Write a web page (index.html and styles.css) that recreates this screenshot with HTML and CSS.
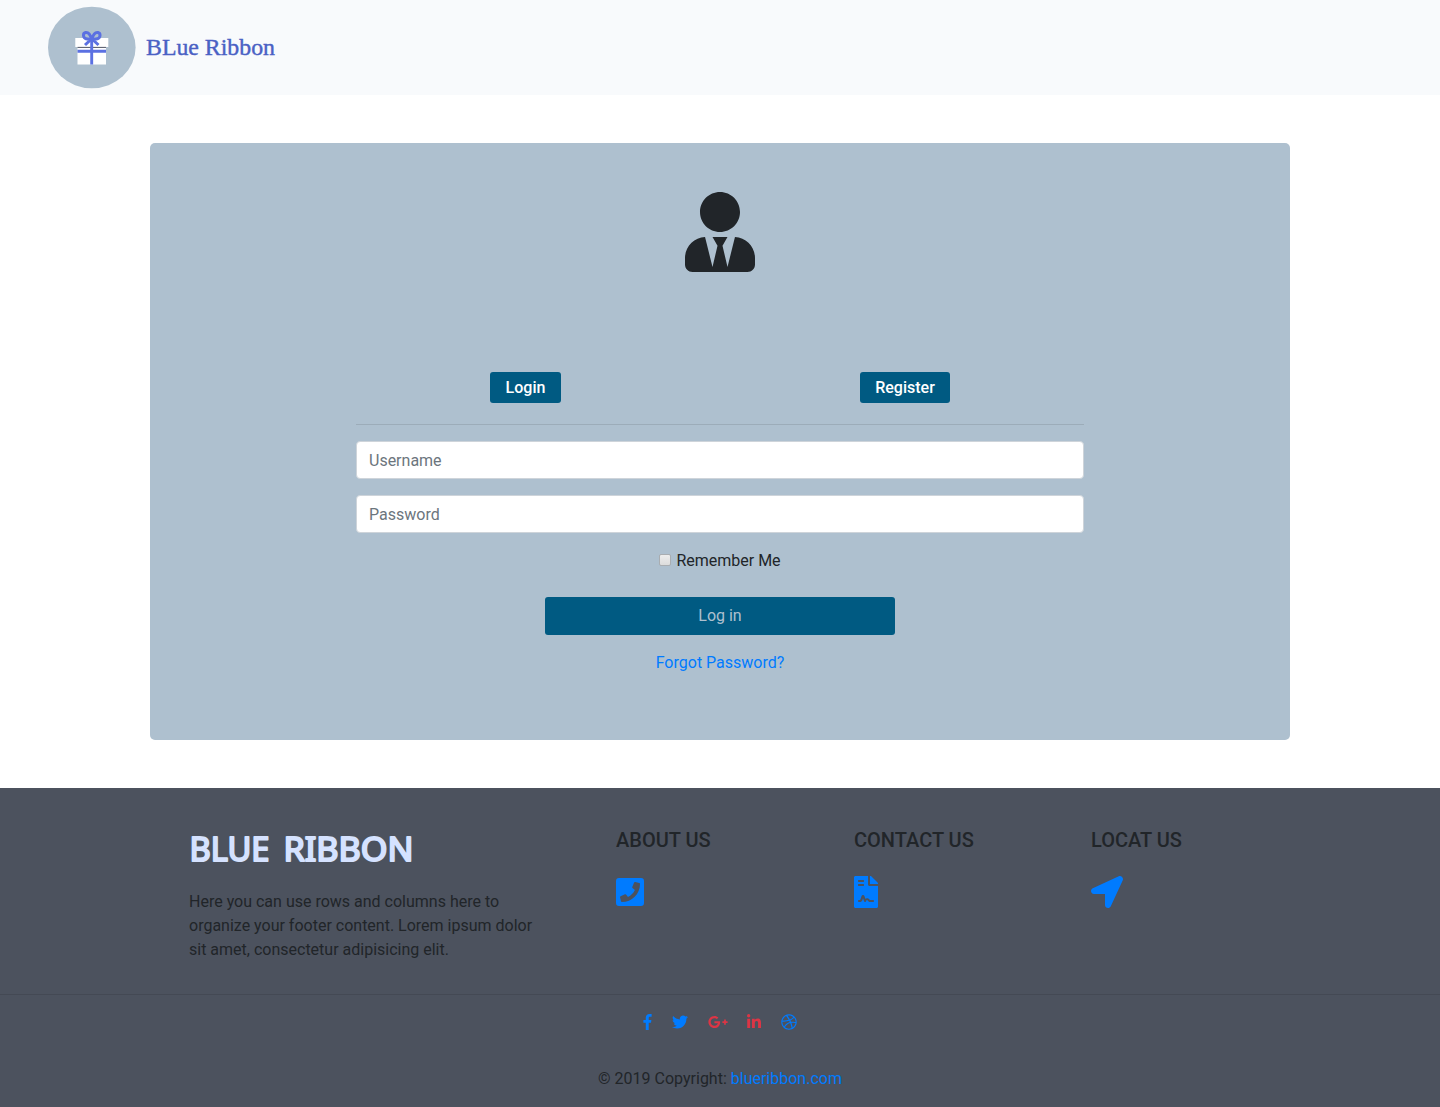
FILE: index.html
```html
<!DOCTYPE html>
<html lang="en">
<head>
<meta charset="utf-8">
<title>Blue Ribbon</title>
<link rel="stylesheet" href="styles.css">
</head>
<body>
<nav class="navbar">
  <a class="brand" href="#">
    <svg width="230" height="83" viewBox="0 0 230 83">
      <ellipse cx="43.8" cy="41.5" rx="43.8" ry="40.8" fill="#aec0cf"/>
      <path fill="#fff" d="M27.3 32h33v9h-33zM29.5 41h28.5v17.500h-28.500z"/>
      <path d="M29.500 41.400h28.500" stroke="#3b4152" stroke-width=".9"/>
      <path d="M29.500 45.300h28.500M43.700 33v25.500" stroke="#5b70e2" stroke-width="2.900"/>
      <path d="M43.700 33.500C42.500 29 40 26 37.500 26.500C34.500 27.300 35 31.800 38 32.700C40 33.300 42 33.200 43.700 33.500C45.400 33.200 47.500 33.300 49.500 32.700C52.500 31.800 53 27.300 50 26.500C47.500 26 45 29 43.700 33.500M44 32.500l-7 6.500M43.500 32.500l7 6.500" fill="none" stroke="#5b70e2" stroke-width="3"/>
      <text class="brand-text" x="98" y="49" textLength="129" lengthAdjust="spacingAndGlyphs">BLue Ribbon</text>
    </svg>
  </a>
</nav>

<main class="card">
  <svg class="avatar" viewBox="0 0 448 512"><path d="M224 256c70.7 0 128-57.3 128-128S294.700 0 224 0 96 57.300 96 128s57.300 128 128 128zm95.800 32.600L272 480l-32-136 32-56h-96l32 56-32 136-47.800-191.400C56.900 292 0 350.300 0 422.400V464c0 26.500 21.500 48 48 48h352c26.500 0 48-21.500 48-48v-41.600c0-72.100-56.900-130.400-128.200-133.800z"/></svg>
  <form class="form">
    <div class="tabs">
      <button type="button" class="tab">Login</button>
      <button type="button" class="tab">Register</button>
    </div>
    <hr class="rule">
    <input class="field" type="text" placeholder="Username">
    <input class="field" type="password" placeholder="Password">
    <label class="remember"><input class="check" type="checkbox"><span>Remember Me</span></label>
    <button type="button" class="submit">Log in</button>
    <a class="link" href="#">Forgot Password?</a>
  </form>
</main>

<footer class="footer">
  <div class="columns">
    <section class="about">
      <svg class="footer-title" width="240" height="43" viewBox="0 0 240 43"><text y="32.500"><tspan x="0.500" textLength="80" lengthAdjust="spacingAndGlyphs">BLUE</tspan> <tspan x="94.500" textLength="130" lengthAdjust="spacingAndGlyphs">RIBBON</tspan></text></svg>
      <p>Here you can use rows and columns here to organize your footer content. Lorem ipsum dolor sit amet, consectetur adipisicing elit.</p>
    </section>
    <section>
      <h5>ABOUT US</h5>
      <a href="#"><svg width="28" height="32" viewBox="0 0 448 512"><path d="M400 32H48A48 48 0 0 0 0 80v352a48 48 0 0 0 48 48h352a48 48 0 0 0 48-48V80a48 48 0 0 0-48-48zM94 416c-7.033 0-13.057-4.873-14.616-11.627l-14.998-65a15 15 0 0 1 8.707-17.160l69.998-29.999a15 15 0 0 1 17.518 4.289l30.997 37.885c48.944-22.963 88.297-62.858 110.781-110.780l-37.886-30.997a15.001 15.001 0 0 1-4.289-17.518l30-69.998a15 15 0 0 1 17.160-8.707l65 14.998A14.997 14.997 0 0 1 384 126c0 160.292-129.945 290-290 290z"/></svg></a>
    </section>
    <section>
      <h5>CONTACT US</h5>
      <a href="#"><svg width="24" height="32" viewBox="0 0 384 512"><path d="M224 136V0H24C10.700 0 0 10.700 0 24v464c0 13.300 10.700 24 24 24h336c13.300 0 24-10.700 24-24V160H248c-13.200 0-24-10.800-24-24zM64 72c0-4.420 3.580-8 8-8h80c4.420 0 8 3.580 8 8v16c0 4.420-3.580 8-8 8H72c-4.420 0-8-3.580-8-8V72zm0 64c0-4.420 3.580-8 8-8h80c4.420 0 8 3.580 8 8v16c0 4.420-3.580 8-8 8H72c-4.420 0-8-3.580-8-8v-16zm192.810 248H304c8.840 0 16 7.160 16 16s-7.160 16-16 16h-47.190c-16.450 0-31.270-9.140-38.640-23.860-2.950-5.920-8.090-6.520-10.170-6.520s-7.220.59-10.020 6.190l-7.670 15.340a15.986 15.986 0 0 1-14.310 8.840c-.38 0-.75-.02-1.140-.05-6.450-.45-12-4.750-14.030-10.890L144 354.590l-10.610 31.880c-5.890 17.660-22.380 29.530-41 29.530H80c-8.840 0-16-7.160-16-16s7.160-16 16-16h12.390c4.830 0 9.110-3.080 10.640-7.660l18.190-54.640c3.300-9.810 12.440-16.410 22.780-16.410s19.480 6.590 22.770 16.410l13.880 41.640c19.770-16.190 54.050-9.700 66 14.160 2.020 4.060 5.960 6.500 10.160 6.500zM377 105L279.100 7c-4.500-4.500-10.600-7-17-7H256v128h128v-6.100c0-6.300-2.500-12.400-7-16.900z"/></svg></a>
    </section>
    <section>
      <h5>LOCAT US</h5>
      <a href="#"><svg width="32" height="32" viewBox="0 0 512 512"><path d="M444.520 3.520L28.740 195.420c-47.970 22.390-31.980 92.750 19.190 92.750h175.910v175.910c0 51.170 70.360 67.170 92.750 19.190l191.900-415.780c15.990-38.390-25.590-79.970-63.970-63.970z"/></svg></a>
    </section>
  </div>
  <hr class="footer-rule">
  <div class="social">
    <a href="#"><svg width="9" height="16" viewBox="0 0 264 512"><path d="M76.700 512V283H0v-91h76.700v-71.700C76.700 42.400 124.300 0 193.800 0c33.300 0 61.900 2.500 70.200 3.600V85h-48.200c-37.800 0-45.100 18-45.100 44.300V192H256l-11.700 91h-73.600v229"/></svg></a>
    <a href="#"><svg width="16" height="16" viewBox="0 0 512 512"><path d="M459.370 151.716c.325 4.548.325 9.097.325 13.645 0 138.720-105.583 298.558-298.558 298.558-59.452 0-114.680-17.219-161.137-47.106 8.447.974 16.568 1.299 25.340 1.299 49.055 0 94.213-16.568 130.274-44.832-46.132-.975-84.792-31.188-98.112-72.772 6.498.974 12.995 1.624 19.818 1.624 9.421 0 18.843-1.300 27.614-3.573-48.081-9.747-84.143-51.980-84.143-102.985v-1.299c13.969 7.797 30.214 12.670 47.431 13.319-28.264-18.843-46.781-51.005-46.781-87.391 0-19.492 5.197-37.360 14.294-52.954 51.655 63.675 129.300 105.258 216.365 109.807-1.624-7.797-2.599-15.918-2.599-24.040 0-57.828 46.782-104.934 104.934-104.934 30.213 0 57.502 12.670 76.670 33.137 23.715-4.548 46.456-13.320 66.599-25.340-7.798 24.366-24.366 44.833-46.132 57.827 21.117-2.273 41.584-8.122 60.426-16.243-14.292 20.791-32.161 39.308-52.628 54.253z"/></svg></a>
    <a class="red" href="#"><svg width="20" height="16" viewBox="0 0 640 512"><path d="M386.061 228.496c1.834 9.692 3.143 19.384 3.143 31.956C389.204 370.205 315.599 448 204.800 448c-106.084 0-192-85.915-192-192s85.916-192 192-192c51.864 0 95.083 18.859 128.611 50.292l-52.126 50.030c-14.145-13.621-39.028-29.599-76.485-29.599-65.484 0-118.920 54.221-118.920 121.277 0 67.056 53.436 121.277 118.920 121.277 75.961 0 104.513-54.745 108.965-82.773H204.800v-66.009h181.261zm185.406 6.437V179.200h-56.001v55.733h-55.733v56.001h55.733v55.733h56.001v-55.733H627.200v-56.001h-55.733z"/></svg></a>
    <a class="red" href="#"><svg width="14" height="16" viewBox="0 0 448 512"><path d="M100.280 448H7.400V148.900h92.880zM53.790 108.100C24.090 108.100 0 83.500 0 53.800a53.790 53.790 0 0 1 107.580 0c0 29.700-24.100 54.300-53.790 54.300zM447.900 448h-92.680V302.400c0-34.700-.7-79.200-48.290-79.200-48.290 0-55.690 37.700-55.690 76.700V448h-92.780V148.900h89.080v40.800h1.300c12.400-23.500 42.690-48.300 87.880-48.300 94 0 111.280 61.900 111.280 142.300V448z"/></svg></a>
    <a href="#"><svg width="16" height="16" viewBox="0 0 512 512"><path d="M256 8C119.252 8 8 119.252 8 256s111.252 248 248 248 248-111.252 248-248S392.748 8 256 8zm163.970 114.366c29.503 36.046 47.369 81.957 47.835 131.955-6.984-1.477-77.018-15.682-147.502-6.818-5.752-14.041-11.181-26.393-18.617-41.614 78.321-31.977 113.818-77.482 118.284-83.523zM396.421 97.870c-3.810 5.427-35.697 48.286-111.021 76.519-34.712-63.776-73.185-116.168-79.040-124.008 67.176-16.193 137.966 1.270 190.061 47.489zm-230.480-33.250c5.585 7.659 43.438 60.116 78.537 122.509-99.087 26.313-186.360 25.934-195.834 25.809C62.380 147.205 106.678 92.573 165.941 64.620zM44.170 256.323c0-2.166.043-4.322.108-6.473 9.268.19 111.920 1.513 217.706-30.146 6.064 11.868 11.857 23.915 17.174 35.949-76.599 21.575-146.194 83.527-180.531 142.306C64.794 360.405 44.170 310.730 44.170 256.323zm81.807 167.113c22.127-45.233 82.178-103.622 167.579-132.756 29.740 77.283 42.039 142.053 45.189 160.638-68.112 29.013-150.015 21.053-212.768-27.882zm248.380 8.489c-2.171-12.886-13.446-74.897-41.152-151.033 66.380-10.626 124.700 6.768 131.947 9.055-9.442 58.941-43.273 109.844-90.795 141.978z"/></svg></a>
  </div>
  <div class="copyright">© 2019 Copyright: <a href="#">blueribbon.com</a></div>
</footer>
</body>
</html>
```
FILE: styles.css
```css
* { box-sizing: border-box; }
body {
  margin: 0;
  font: 400 16px/24px Roboto, sans-serif;
  color: #212529;
  background: #fff;
}
a { color: #007bff; text-decoration: none; }
svg { display: block; fill: currentColor; }

.navbar { height: 95px; padding: 6px 48px; background: #f8fafc; }
.brand { display: inline-block; }
.brand-text {
  font: 23px "Liberation Serif", serif;
  fill: #4a61c4;
  stroke: #4a61c4;
  stroke-width: .4px;
}

.card {
  display: flex;
  flex-direction: column;
  align-items: center;
  width: 1140px;
  height: 597px;
  margin: 48px auto;
  padding-top: 49px;
  background: #aec0cf;
  border-radius: 5px;
}
.avatar { width: 70px; height: 80px; }
.form {
  display: flex;
  flex-direction: column;
  align-items: center;
  width: 728px;
  margin-top: 100px;
}
.tabs {
  display: grid;
  grid-template-columns: 1fr 1fr;
  justify-items: center;
  width: 760px;
  margin-left: -10px;
}
.tab, .submit {
  border: 0;
  border-radius: 3px;
  background: #005a82;
  color: #fff;
  font: 500 16px/24px Roboto, sans-serif;
}
.tab { height: 31px; padding: 0 15.500px; }
.tab:first-child { width: 71px; margin-left: 1px; }
.rule { width: 100%; margin: 21px 0 16px; border: 0; border-top: 1px solid rgba(0, 0, 0, .1); }
.field {
  width: 100%;
  height: 38px;
  margin-bottom: 16px;
  padding: 6px 12px;
  border: 1px solid #ced4da;
  border-radius: 4px;
  background: #fff;
  font: inherit;
}
.field::placeholder { color: #6c757d; opacity: 1; }
.remember { display: flex; align-items: center; gap: 5px; height: 24px; }
.check {
  appearance: none;
  width: 12px;
  height: 12px;
  margin: -3px 0 0;
  border: 1px solid #a9adb1;
  border-radius: 2px;
  background: linear-gradient(#ededed, #dcdcdc);
}
.submit {
  width: 350px;
  height: 38px;
  margin: 24px 0 16px;
  color: #aec0cf;
  font-weight: 400;
}

.footer { height: 319px; padding-top: 40px; background: #4c525e; }
.columns {
  display: grid;
  grid-template-columns: 427px 238px 237px 160px;
  width: 1062px;
  height: 166px;
  margin: 0 auto;
}
.footer-title { overflow: visible; }
.footer-title text {
  font: 400 33px/1 "Noto Sans", sans-serif;
  fill: #d5e2ff;
  stroke: #d5e2ff;
  stroke-width: 2px;
  stroke-linejoin: round;
}
.about p { width: 350px; margin: 19px 0 0; }
h5 { margin: 0 0 24px; font-size: 20px; line-height: 24px; font-weight: 500; }
.footer-rule { margin: 0; border: 0; border-top: 1px solid rgba(0, 0, 0, .1); }
.social { display: flex; justify-content: center; gap: 19.700px; padding-top: 19px; }
.social .red { color: #dc3545; }
.copyright { margin-top: 37px; text-align: center; }
```
